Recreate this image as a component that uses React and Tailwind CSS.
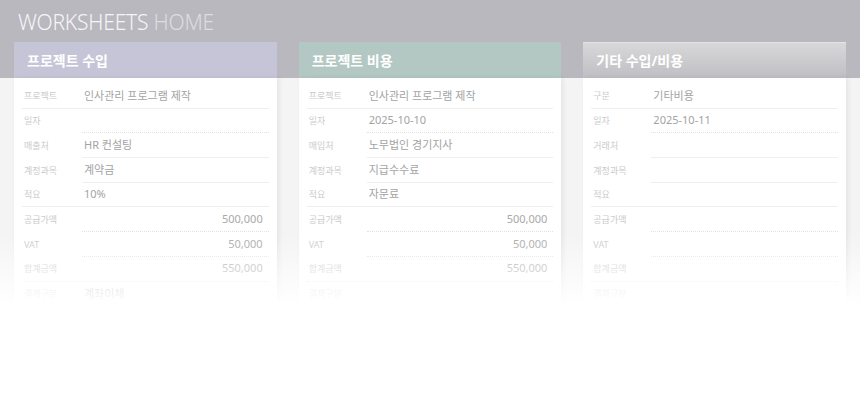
import React from "react";

const KR = { fontFamily: '"Noto Sans", "Noto Sans CJK KR", sans-serif' };

const cards = [
  {
    title: "프로젝트 수입",
    head: "bg-[#c6c5d8]",
    rows: [
      ["프로젝트", "인사관리 프로그램 제작", "full"],
      ["일자", "", "dot"],
      ["매출처", "HR 컨설팅", "val"],
      ["계정과목", "계약금", "val"],
      ["적요", "10%", "full"],
      ["공급가액", "500,000", "dot", true],
      ["VAT", "50,000", "dot", true],
      ["합계금액", "550,000", "fulldot", true],
      ["결제구분", "계좌이체", "none"],
    ],
  },
  {
    title: "프로젝트 비용",
    head: "bg-[#b3c8c3]",
    rows: [
      ["프로젝트", "인사관리 프로그램 제작", "full"],
      ["일자", "2025-10-10", "dot"],
      ["매입처", "노무법인 경기지사", "val"],
      ["계정과목", "지급수수료", "val"],
      ["적요", "자문료", "full"],
      ["공급가액", "500,000", "dot", true],
      ["VAT", "50,000", "dot", true],
      ["합계금액", "550,000", "fulldot", true],
      ["결제구분", "", "none"],
    ],
  },
  {
    title: "기타 수입/비용",
    head: "bg-[linear-gradient(to_bottom,#d8d8da,#bfbfc3)] border-t border-[#e4e4e6]",
    rows: [
      ["구분", "기타비용", "full"],
      ["일자", "2025-10-11", "dot"],
      ["거래처", "", "val"],
      ["계정과목", "", "val"],
      ["적요", "", "full"],
      ["공급가액", "", "dot", true],
      ["VAT", "", "dot", true],
      ["합계금액", "", "fulldot", true],
      ["결제구분", "", "none"],
    ],
  },
];

function Row({ label, value, line, num }) {
  const full = line === "full" || line === "fulldot";
  const lineCls =
    line === "none"
      ? ""
      : line === "dot" || line === "fulldot"
      ? "border-b border-dotted border-[#e2e2e2]"
      : "border-b border-[#efefef]";
  return (
    <div className={`flex h-[24.7px] items-center ${full ? lineCls : ""}`}>
      <div className="w-[60px] shrink-0 pl-[2px] text-[9px] text-[#cbcbcb]">{label}</div>
      <div
        className={`flex h-full flex-1 items-center text-[11px] text-[#a3a3a3] ${
          full ? "" : lineCls
        } ${num ? "justify-end pr-[6px] text-[#a9a9a9]" : "pl-[2px]"}`}
      >
        {value}
      </div>
    </div>
  );
}

export default function App() {
  return (
    <div
      className="relative h-[415px] w-[860px] overflow-hidden bg-[linear-gradient(to_bottom,#b9b8bf_78px,#f4f4f4_78px)]"
      style={KR}
    >
      <div className="h-[42px] pl-[18px] pt-[8px] text-[21px] font-light leading-[28px] tracking-[-0.2px]">
        <span className="text-[#f5f5f7]">WORKSHEETS</span>{" "}
        <span className="text-[#dddce1]">HOME</span>
      </div>
      <div className="flex gap-[22px] px-[14px]">
        {cards.map((c) => (
          <div key={c.title} className="flex-1">
            <div
              className={`flex h-[36px] items-center pl-[13px] text-[14px] font-bold text-white ${c.head}`}
            >
              {c.title}
            </div>
            <div className="bg-white px-[8px] pb-[10px] pt-[6px] shadow-[2px_0_5px_rgba(0,0,0,0.07)]">
              {c.rows.map((r) => (
                <Row key={r[0]} label={r[0]} value={r[1]} line={r[2]} num={r[3]} />
              ))}
            </div>
          </div>
        ))}
      </div>
      <div className="pointer-events-none absolute inset-x-0 top-[235px] h-[70px] bg-[linear-gradient(to_bottom,rgba(255,255,255,0),#ffffff)]" />
      <div className="pointer-events-none absolute inset-x-0 bottom-0 top-[305px] bg-white" />
    </div>
  );
}
